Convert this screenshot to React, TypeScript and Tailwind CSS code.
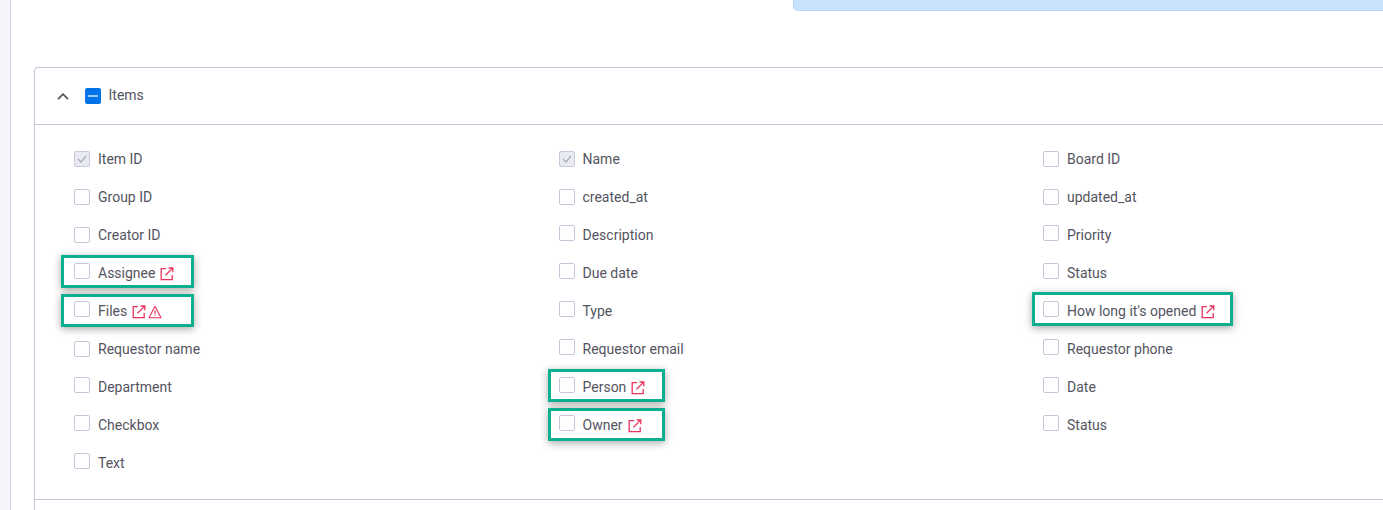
type Field = {
  label: string
  checked?: boolean
  raised?: boolean
  link?: boolean
  warn?: boolean
  box?: string
}

// green review boxes drawn over some of the rows
const BOXES = {
  assignee: 'left-[-13px] top-[1px] w-[133px] h-[33px]',
  files: 'left-[-13px] top-[2px] w-[133px] h-[33px]',
  person: 'left-[-11px] top-[1px] w-[117px] h-[33px]',
  owner: 'left-[-11px] top-[2px] w-[117px] h-[33px]',
  opened: 'left-[-11px] top-[0px] w-[201px] h-[34px]',
}

const FIELDS: Field[] = [
  { label: 'Item ID', checked: true },
  { label: 'Name', checked: true },
  { label: 'Board ID' },
  { label: 'Group ID' },
  { label: 'created_at' },
  { label: 'updated_at' },
  { label: 'Creator ID' },
  { label: 'Description', raised: true },
  { label: 'Priority', raised: true },
  { label: 'Assignee', raised: true, link: true, box: BOXES.assignee },
  { label: 'Due date', raised: true },
  { label: 'Status', raised: true },
  { label: 'Files', raised: true, link: true, warn: true, box: BOXES.files },
  { label: 'Type', raised: true },
  { label: "How long it's opened", raised: true, link: true, box: BOXES.opened },
  { label: 'Requestor name' },
  { label: 'Requestor email', raised: true },
  { label: 'Requestor phone', raised: true },
  { label: 'Department', raised: true },
  { label: 'Person', raised: true, link: true, box: BOXES.person },
  { label: 'Date', raised: true },
  { label: 'Checkbox', raised: true },
  { label: 'Owner', raised: true, link: true, box: BOXES.owner },
  { label: 'Status', raised: true },
  { label: 'Text', raised: true },
]

function LinkIcon() {
  return (
    <svg width="14" height="14" viewBox="0 0 14 14" fill="none" stroke="#e8345c" strokeWidth="1.3" className="relative ml-[5px] mt-[2px]">
      <path d="M6 1.7H1.2v11h11V8" />
      <path d="M5.5 8.2 12.4 1.4M8.6 1h4.2v4.2" />
    </svg>
  )
}

function WarnIcon() {
  return (
    <svg width="14" height="14" viewBox="0 0 14 14" fill="none" stroke="#e8345c" strokeWidth="1.1" strokeLinejoin="round" className="relative ml-[2px] mt-[2px]">
      <path d="M7 1.3 13 12.7H1L7 1.3Z" />
      <path d="M7 5.2v3.8M7 10v1.1" />
    </svg>
  )
}

function FieldRow({ field }: { field: Field }) {
  return (
    <div className="relative flex h-[38px] items-center">
      {field.box && (
        <div className={`absolute border-[3px] border-[#0db08e] shadow-[0_2px_8px_rgba(0,0,0,0.35)] ${field.box}`} />
      )}
      <span
        className={`relative flex h-4 w-4 items-center justify-center rounded-[2px] border ${
          field.checked ? 'border-[#c9cadb] bg-[#e9eaf3]' : 'border-[#c5c7d9] bg-white'
        } ${field.raised ? 'mt-[-4px]' : ''}`}
      >
        {field.checked && (
          <svg width="10" height="8" viewBox="0 0 10 8" fill="none" stroke="#a9abb8" strokeWidth="1.2">
            <path d="M1 4l3 3 5-6" />
          </svg>
        )}
      </span>
      <span className="relative ml-2 text-[14px] text-[#54545f]">{field.label}</span>
      {field.link && <LinkIcon />}
      {field.warn && <WarnIcon />}
    </div>
  )
}

export default function App() {
  return (
    <div className="flex h-[510px] overflow-hidden bg-white font-['Roboto',sans-serif]">
      <div className="h-full w-[11px] shrink-0 border-r border-[#cdd0e2] bg-[#f5f6fc]" />
      <main className="flex min-w-0 flex-1 flex-col pl-[23px]">
        <div className="ml-[759px] h-[11px] shrink-0 rounded-bl-[5px] border-b border-l border-[#b3d8fb] bg-[#c9e3fe]" />
        <section className="mt-[56px] w-[1400px] shrink-0 rounded-tl-[4px] border-t border-l border-[#c5c7d9]">
          <header className="flex h-[57px] items-center border-b border-[#c5c7d9] pl-[22px]">
            <svg width="12" height="7" viewBox="0 0 12 7" fill="none" stroke="#585862" strokeWidth="1.8">
              <path d="M1 6.2 6 1.2 11 6.2" />
            </svg>
            <span className="ml-[16px] flex h-4 w-4 items-center justify-center rounded-[2px] bg-[#0073ea]">
              <span className="h-[2px] w-[10px] bg-[#9ccbfa]" />
            </span>
            <span className="ml-[7.5px] mb-[2px] text-[14px] text-[#54545f]">Items</span>
          </header>
          <div className="grid w-[1453px] grid-cols-[484.5px_484.5px_484px] pl-[39px] pt-[15px] pb-[17px]">
            {FIELDS.map((f, i) => (
              <FieldRow key={i} field={f} />
            ))}
          </div>
          <div className="h-[30px] border-t border-[#c5c7d9]" />
        </section>
      </main>
    </div>
  )
}
